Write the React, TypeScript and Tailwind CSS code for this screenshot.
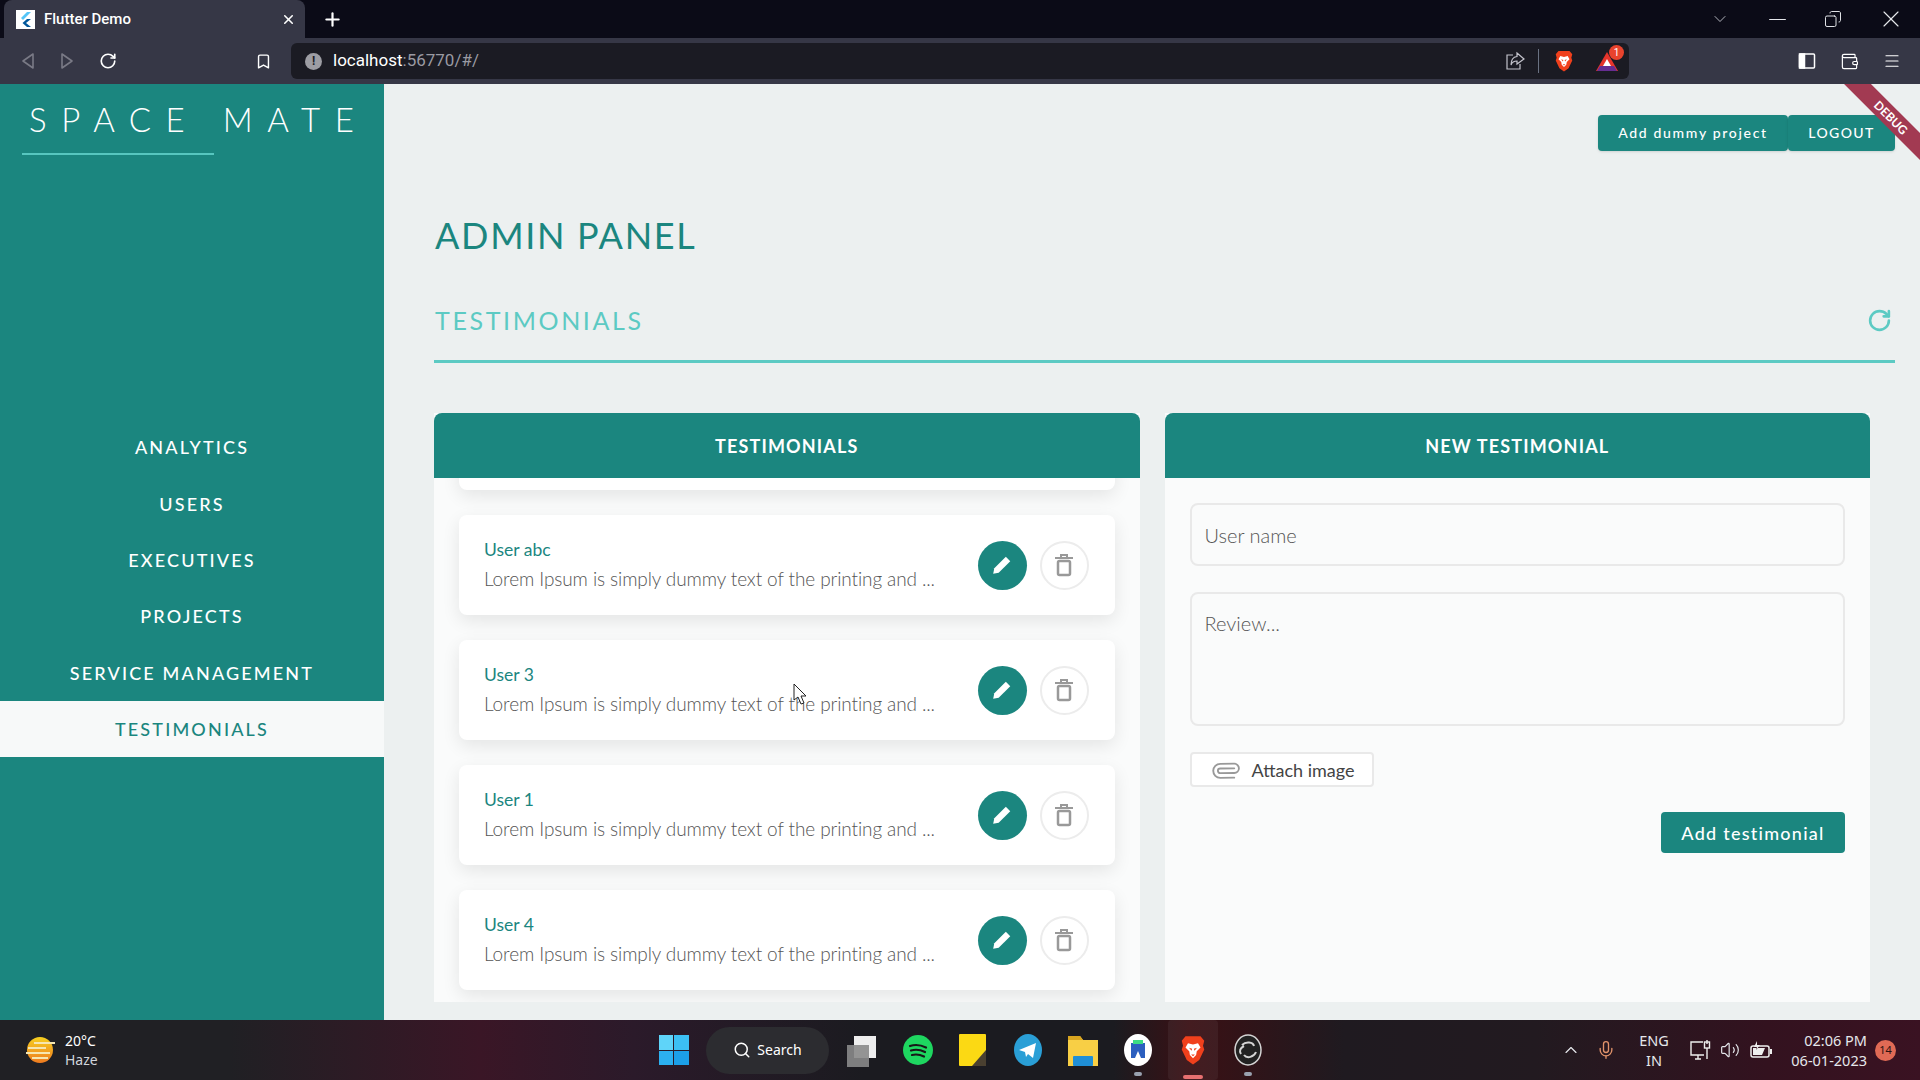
import { ChevronDown, ChevronUp, Mic, Minus, Paperclip, Plus, RotateCw, Search, Volume2, X, Bookmark, Copy, Menu, Wallet } from 'lucide-react'

const navItems = ['ANALYTICS', 'USERS', 'EXECUTIVES', 'PROJECTS', 'SERVICE MANAGEMENT', 'TESTIMONIALS']
const testimonials = ['User abc', 'User 3', 'User 1', 'User 4']
const lorem = 'Lorem Ipsum is simply dummy text of the printing and ...'

function BraveLion({ size = 22 }: { size?: number }) {
  return (
    <svg width={size} height={size} viewBox="0 0 24 24">
      <path d="M6 1h12l3 3.500-1 4 1 3-4 8.500-5 3.500-5-3.500-4-8.500 1-3-1-4z" fill="#f0401c" />
      <path d="M8 6.500l4 1 4-1 2 3.500-3 3-.5 3-2.500 2.500L9.500 16 9 13l-3-3z" fill="#fff" />
      <path d="M8.800 10.200l2.500.8-.5 1.500zM15.200 10.200l-2.500.8.500 1.500zM10.500 15.500h3L12 17z" fill="#f0401c" />
    </svg>
  )
}

function BrowserChrome() {
  return (
    <div className="shrink-0 font-['Roboto',sans-serif]">
      <div className="flex h-[38px] items-center bg-[#0b0b17] text-white">
        <div className="ml-1 flex h-full w-[301px] items-center rounded-t-lg bg-[#363746] pl-[12px] pr-[9px]">
          <div className="flex size-[19px] items-center justify-center bg-white">
            <svg width="14" height="16" viewBox="0 0 14 16">
              <path d="M8 1h4L4 9 2 7z" fill="#54c5f8" />
              <path d="M8 8h4L7 12l5 4H8L3.500 12z" fill="#01579b" />
            </svg>
          </div>
          <span className="ml-[9px] text-[15px] font-medium">Flutter Demo</span>
          <X size={15} className="ml-auto" strokeWidth={2.5} />
        </div>
        <Plus size={21} className="ml-[17px]" strokeWidth={2.5} />
        <ChevronDown size={20} className="ml-auto mr-[34px] text-gray-300" strokeWidth={1} />
        <Minus size={27} className="mr-[33px] text-gray-200" strokeWidth={1} />
        <Copy size={18} className="mr-[35px] -scale-x-100 text-gray-200" strokeWidth={1.3} />
        <X size={28} className="mr-[15px] text-gray-200" strokeWidth={1} />
      </div>
      <div className="flex h-[46px] items-center bg-[#363746] text-white">
        <svg className="ml-[21px]" width="14" height="18" viewBox="0 0 14 18" fill="none" stroke="#7a7a86" strokeWidth="1.600">
          <path d="M12 2v14L2 9z" strokeLinejoin="round" />
        </svg>
        <svg className="ml-[25px]" width="14" height="18" viewBox="0 0 14 18" fill="none" stroke="#7a7a86" strokeWidth="1.600">
          <path d="M2 2v14l10-7z" strokeLinejoin="round" />
        </svg>
        <RotateCw size={18} className="ml-[25px]" strokeWidth={2.2} />
        <Bookmark size={17} className="ml-[138px]" strokeWidth={2} />
        <div className="ml-[19px] flex h-[36px] w-[1338px] items-center rounded-md bg-[#1b1b23] pl-[14px]">
          <span className="flex size-[17px] items-center justify-center rounded-full bg-[#9d9da3] text-xs font-bold text-[#1b1b23]">!</span>
          <span className="ml-[11px] text-[17px] text-white">localhost<span className="text-[#9a9aa2]">:56770/#/</span></span>
          <svg className="ml-auto mr-[-2px]" width="20" height="20" viewBox="0 0 20 20" fill="none" stroke="#c4c4cc" strokeWidth="1.200">
            <path d="M8 4H2v14h13v-5" />
            <path d="M12 2l7 6-7 5v-3c-3 0-5 1-6 4 0-5 2-8 6-8.500z" />
          </svg>
          <div className="ml-[15px] h-[24px] w-px bg-gray-500" />
          <div className="ml-[14px]"><BraveLion /></div>
          <div className="relative ml-[20px] mr-[10px]">
            <svg width="24" height="22" viewBox="0 0 24 22">
              <path d="M12 2l11 19H1z" fill="#e6342b" />
              <path d="M5 16h14l3 5H2z" fill="#662d91" />
              <path d="M12 9l4 7H8z" fill="#fff" />
            </svg>
            <span className="absolute -right-[5px] -top-[5px] flex size-[15px] items-center justify-center rounded-full bg-[#e8432d] text-[10px] text-white">1</span>
          </div>
        </div>
        <svg className="ml-[169px]" width="18" height="18" viewBox="0 0 18 18" fill="none" stroke="#fff" strokeWidth="1.500">
          <rect x="1.500" y="2" width="15" height="14" rx="1" />
          <path d="M1.500 2h5v14h-5z" fill="#fff" />
        </svg>
        <Wallet size={19} className="ml-[24px]" strokeWidth={1.5} />
        <Menu size={18} className="ml-[24px]" strokeWidth={1.6} />
      </div>
    </div>
  )
}

function Sidebar() {
  return (
    <aside className="flex w-[384px] shrink-0 flex-col bg-[#1b867f] text-white">
      <div className="pl-[29px] pt-[15px] text-[33px] font-light leading-[40px] tracking-[0.44em] whitespace-nowrap">SPACE MATE</div>
      <div className="ml-[22px] mt-[14px] h-[2px] w-[192px] bg-[#57c6bf]" />
      <nav className="mt-[264px] flex flex-col">
        {navItems.map((item) => (
          <div
            key={item}
            className={`flex h-[56.400px] items-center justify-center text-lg font-medium tracking-[0.12em] ${item === 'TESTIMONIALS' ? 'bg-[#f7f9f9] text-[#1b867f]' : ''}`}
          >
            {item}
          </div>
        ))}
      </nav>
    </aside>
  )
}

function TestimonialCard({ name }: { name: string }) {
  return (
    <div className="flex h-[100px] shrink-0 items-center rounded-lg bg-white pl-[25px] pr-[26px] shadow-[0_6px_18px_rgba(0,0,0,0.09)]">
      <div className="flex-1">
        <div className="text-[17.500px] font-normal leading-[22px] text-[#1b867f]">{name}</div>
        <div className="mt-[6px] text-[19px] font-light leading-[24px] tracking-[-0.1px] text-[#555]">{lorem}</div>
      </div>
      <div className="flex size-[49px] items-center justify-center rounded-full bg-[#1b867f]">
        <svg width="22" height="22" viewBox="0 0 20 20">
          <path d="M13.500 2.500l4 4L7 17l-5 1 1-5z" fill="#fff" />
        </svg>
      </div>
      <div className="ml-[13px] flex size-[49px] items-center justify-center rounded-full border-2 border-[#ececec]">
        <svg width="20" height="24" viewBox="0 0 20 24" fill="none" stroke="#999">
          <path d="M1 5h18M7 4V2h6v2" strokeWidth="2" />
          <rect x="4" y="8" width="12" height="14" rx="1.500" strokeWidth="2.500" />
        </svg>
      </div>
    </div>
  )
}

function PanelHeader({ title }: { title: string }) {
  return (
    <div className="flex h-[65px] shrink-0 items-center justify-center rounded-t-lg bg-[#1b867f] text-lg font-bold tracking-[0.065em] text-white">
      {title}
    </div>
  )
}

function Main() {
  return (
    <main className="relative flex min-w-0 flex-1 flex-col overflow-hidden bg-[#ecf0f0] pl-[50px] pr-[25px]">
      <div className="mt-[31px] flex justify-end">
        <button className="flex h-[36px] w-[190px] items-center justify-center rounded bg-[#1b867f] text-sm font-medium tracking-[0.12em] text-white shadow-sm">Add dummy project</button>
        <button className="flex h-[36px] w-[107px] items-center justify-center rounded bg-[#1b867f] text-sm font-medium tracking-[0.1em] text-white shadow-sm">LOGOUT</button>
      </div>
      <h1 className="ml-px mt-[60px] text-[36px] font-normal leading-[48px] tracking-[0.047em] text-[#1b867f]">ADMIN PANEL</h1>
      <div className="mt-[43px] flex items-center justify-between pr-[3px]">
        <h2 className="ml-px text-[25px] leading-[36px] tracking-[0.105em] text-[#5ccac3]">TESTIMONIALS</h2>
        <RotateCw size={25} className="text-[#5ccac3]" strokeWidth={2.5} />
      </div>
      <div className="mt-[22px] h-[3px] bg-[#5ccac3]" />
      <div className="mt-[50px] flex h-[589px] gap-[25px] pr-[25px]">
        <section className="flex w-[706px] flex-col bg-[#fafbfb]">
          <PanelHeader title="TESTIMONIALS" />
          <div className="flex flex-1 flex-col gap-[25px] overflow-hidden px-[25px]">
            <div className="-mt-[88px] h-[100px] shrink-0 rounded-lg bg-white shadow-[0_6px_18px_rgba(0,0,0,0.09)]" />
            {testimonials.map((name) => (
              <TestimonialCard key={name} name={name} />
            ))}
          </div>
        </section>
        <section className="flex w-[706px] flex-col bg-[#fafbfb]">
          <PanelHeader title="NEW TESTIMONIAL" />
          <div className="flex flex-col px-[25px] pt-[25px]">
            <div className="flex h-[63px] items-center rounded-lg border-2 border-[#e9e9e9] px-[13px] text-xl font-light text-[#555]">User name</div>
            <div className="mt-[26px] h-[134px] rounded-lg border-2 border-[#e9e9e9] px-[13px] pt-[15px] text-xl font-light leading-[28px] text-[#555]">Review...</div>
            <button className="mt-[26px] flex h-[35px] w-[184px] items-center rounded border-2 border-[#e9e9e9] bg-white pl-[20px] text-lg font-normal text-[#444]">
              <Paperclip size={28} className="mr-[12px] rotate-[45deg] text-[#999]" strokeWidth={1.6} />
              Attach image
            </button>
            <div className="mt-[25px] flex justify-end">
              <button className="flex h-[41px] w-[184px] items-center justify-center rounded bg-[#1b867f] text-lg font-medium tracking-[0.07em] text-white">Add testimonial</button>
            </div>
          </div>
        </section>
      </div>
      {/* debug banner + pointer lie over the page */}
      <div className="absolute -right-[46px] top-[24px] flex h-[19px] w-[150px] rotate-45 items-center justify-center bg-[#a23a52] text-xs font-bold text-white">DEBUG</div>
      <svg className="absolute left-[409px] top-[599px]" width="16" height="22" viewBox="0 0 16 22">
        <path d="M1 1v16l4-3 3 7 3-1-3-7h5z" fill="#fff" stroke="#222" strokeWidth="1" />
      </svg>
    </main>
  )
}

function Taskbar() {
  return (
    <div className="relative flex h-[60px] shrink-0 items-center bg-[linear-gradient(90deg,#202024_0%,#202024_12%,#3a1626_25%,#2b1a2a_33%,#1b1b20_45%,#1b1b20_58%,#3a1014_62%,#1f1a20_70%,#221a20_80%,#33121f_92%,#3a1222_100%)] font-['Noto_Sans',sans-serif] text-white">
      <div className="ml-[24px] flex items-center">
        <svg width="32" height="30" viewBox="0 0 32 30">
          <defs>
            <linearGradient id="sun" x1="0" y1="0" x2="0" y2="1">
              <stop offset="0" stopColor="#f6d020" />
              <stop offset="1" stopColor="#ee7a20" />
            </linearGradient>
          </defs>
          <circle cx="16" cy="15" r="13" fill="url(#sun)" />
          <path d="M10 8h21M2 18h24M4 13h18M8 23h16" stroke="#f6e6b0" strokeWidth="1.800" />
        </svg>
        <div className="ml-[9px] text-sm leading-[19px]">
          <div>20°C</div>
          <div className="text-gray-300">Haze</div>
        </div>
      </div>

      <div className="absolute left-[646px] flex items-center">
        <div className="flex w-[55px] justify-center">
          <div className="grid size-[30px] grid-cols-2 gap-[1px]">
            <div className="bg-[#5fd4f9]" /><div className="bg-[#3cc0f4]" /><div className="bg-[#2cb0f0]" /><div className="bg-[#1c9fe8]" />
          </div>
        </div>
        <div className="ml-[5px] flex h-[47px] w-[123px] items-center justify-center rounded-full bg-[#2c2c30] text-sm">
          <Search size={18} className="mr-[6px]" />Search
        </div>
        <div className="relative ml-[6px] h-[40px] w-[55px]">
          <div className="absolute left-[19px] top-[6px] size-[22px] bg-[#eeeeee]" />
          <div className="absolute left-[12px] top-[15px] size-[22px] bg-[#8a8a8a]/90" />
        </div>
        <div className="flex w-[55px] justify-center">
          <svg width="30" height="30" viewBox="0 0 30 30" fill="none">
            <circle cx="15" cy="15" r="15" fill="#1ed760" />
            <path d="M7 11c6-2 11-1 16 1.500M8 15.500c5-1.500 10-.5 14 1.500M9 20c4-1 8-.5 12 1.500" stroke="#181818" strokeWidth="2.200" strokeLinecap="round" />
          </svg>
        </div>
        <div className="flex w-[55px] justify-center">
          <svg width="27" height="32" viewBox="0 0 27 32">
            <rect width="27" height="32" rx="1" fill="#fbd914" />
            <path d="M27 16v16H13z" fill="#4a4030" />
          </svg>
        </div>
        <div className="flex w-[55px] justify-center">
          <svg width="28" height="32" viewBox="0 0 28 32">
            <ellipse cx="14" cy="16" rx="14" ry="16" fill="#2a9fd6" />
            <path d="M5 16l17-7-3 15-5-4-2 3-1-5z" fill="#fff" />
          </svg>
        </div>
        <div className="flex w-[55px] justify-center">
          <svg width="30" height="32" viewBox="0 0 30 32">
            <path d="M0 2h12l3 4h15v26H0z" fill="#f8cf45" />
            <path d="M0 2h12l3 4H0z" fill="#d9a520" />
            <rect x="5" y="22" width="20" height="10" rx="1" fill="#1f8fd6" />
          </svg>
        </div>
        <div className="relative flex w-[55px] justify-center">
          <svg width="28" height="32" viewBox="0 0 28 32">
            <ellipse cx="14" cy="16" rx="14" ry="16" fill="#fff" />
            <path d="M7 9h14v15h-4l-3-7-3 7H7z" fill="#2c5fbf" />
            <path d="M9 6h10v4H9z" fill="#3ddc84" />
          </svg>
          <div className="absolute -bottom-[10px] h-[4px] w-[8px] rounded-full bg-gray-400" />
        </div>
        <div className="relative mx-[2.500px] flex h-[60px] w-[50px] items-center justify-center rounded bg-white/5">
          <BraveLion size={30} />
          <div className="absolute bottom-[1px] h-[4px] w-[20px] rounded-full bg-[#e87070]" />
        </div>
        <div className="relative flex w-[55px] justify-center">
          <svg width="28" height="32" viewBox="0 0 28 32" fill="none" stroke="#d4d4d4">
            <ellipse cx="14" cy="16" rx="13" ry="15" fill="#222" strokeWidth="1.500" />
            <path d="M8 11c4-4 11-3 12 1M22 18c-2 5-9 7-12 3M7 20c-2-3-1-6 3-8" strokeWidth="2" />
          </svg>
          <div className="absolute -bottom-[10px] h-[4px] w-[8px] rounded-full bg-gray-400" />
        </div>
      </div>

      <div className="ml-auto flex items-center pr-[24px]">
        <ChevronUp size={20} className="mr-[15px] text-gray-200" strokeWidth={1.4} />
        <Mic size={20} className="mr-[21px] text-[#e0926a]" strokeWidth={1.6} />
        <div className="mr-[18px] w-[34px] text-center text-[14.500px] leading-[20px] text-gray-200">ENG<br />IN</div>
        <svg className="mr-[9px]" width="22" height="22" viewBox="0 0 22 22" fill="none" stroke="#eee" strokeWidth="1.400">
          <path d="M14 3H2v13h13M6 20h6M9 16v4M18 1v4M18 9v11" />
          <rect x="15.500" y="3" width="5" height="6" />
        </svg>
        <Volume2 size={20} className="mr-[9px] text-gray-200" strokeWidth={1.4} />
        <svg className="mr-[6px]" width="24" height="20" viewBox="0 0 24 20">
          <rect x="2" y="6" width="18" height="11" rx="2" fill="none" stroke="#eee" strokeWidth="1.500" />
          <path d="M4 8h12l-3 7H4z M21 9h2v5h-2z M8 1L5 7h3l-1 3 4-5H8z" fill="#eee" />
        </svg>
        <div className="w-[88px] text-right text-[14.500px] leading-[20px] text-gray-200">
          02:06 PM<br />06-01-2023
        </div>
        <div className="ml-[8px] flex size-[21px] items-center justify-center rounded-full bg-[#e06a55] text-[11px] text-[#2a1210]">14</div>
      </div>
    </div>
  )
}

export default function App() {
  return (
    <div className="flex h-screen flex-col overflow-hidden font-['Lato',sans-serif]">
      <BrowserChrome />
      <div className="flex min-h-0 flex-1">
        <Sidebar />
        <Main />
      </div>
      <Taskbar />
    </div>
  )
}
